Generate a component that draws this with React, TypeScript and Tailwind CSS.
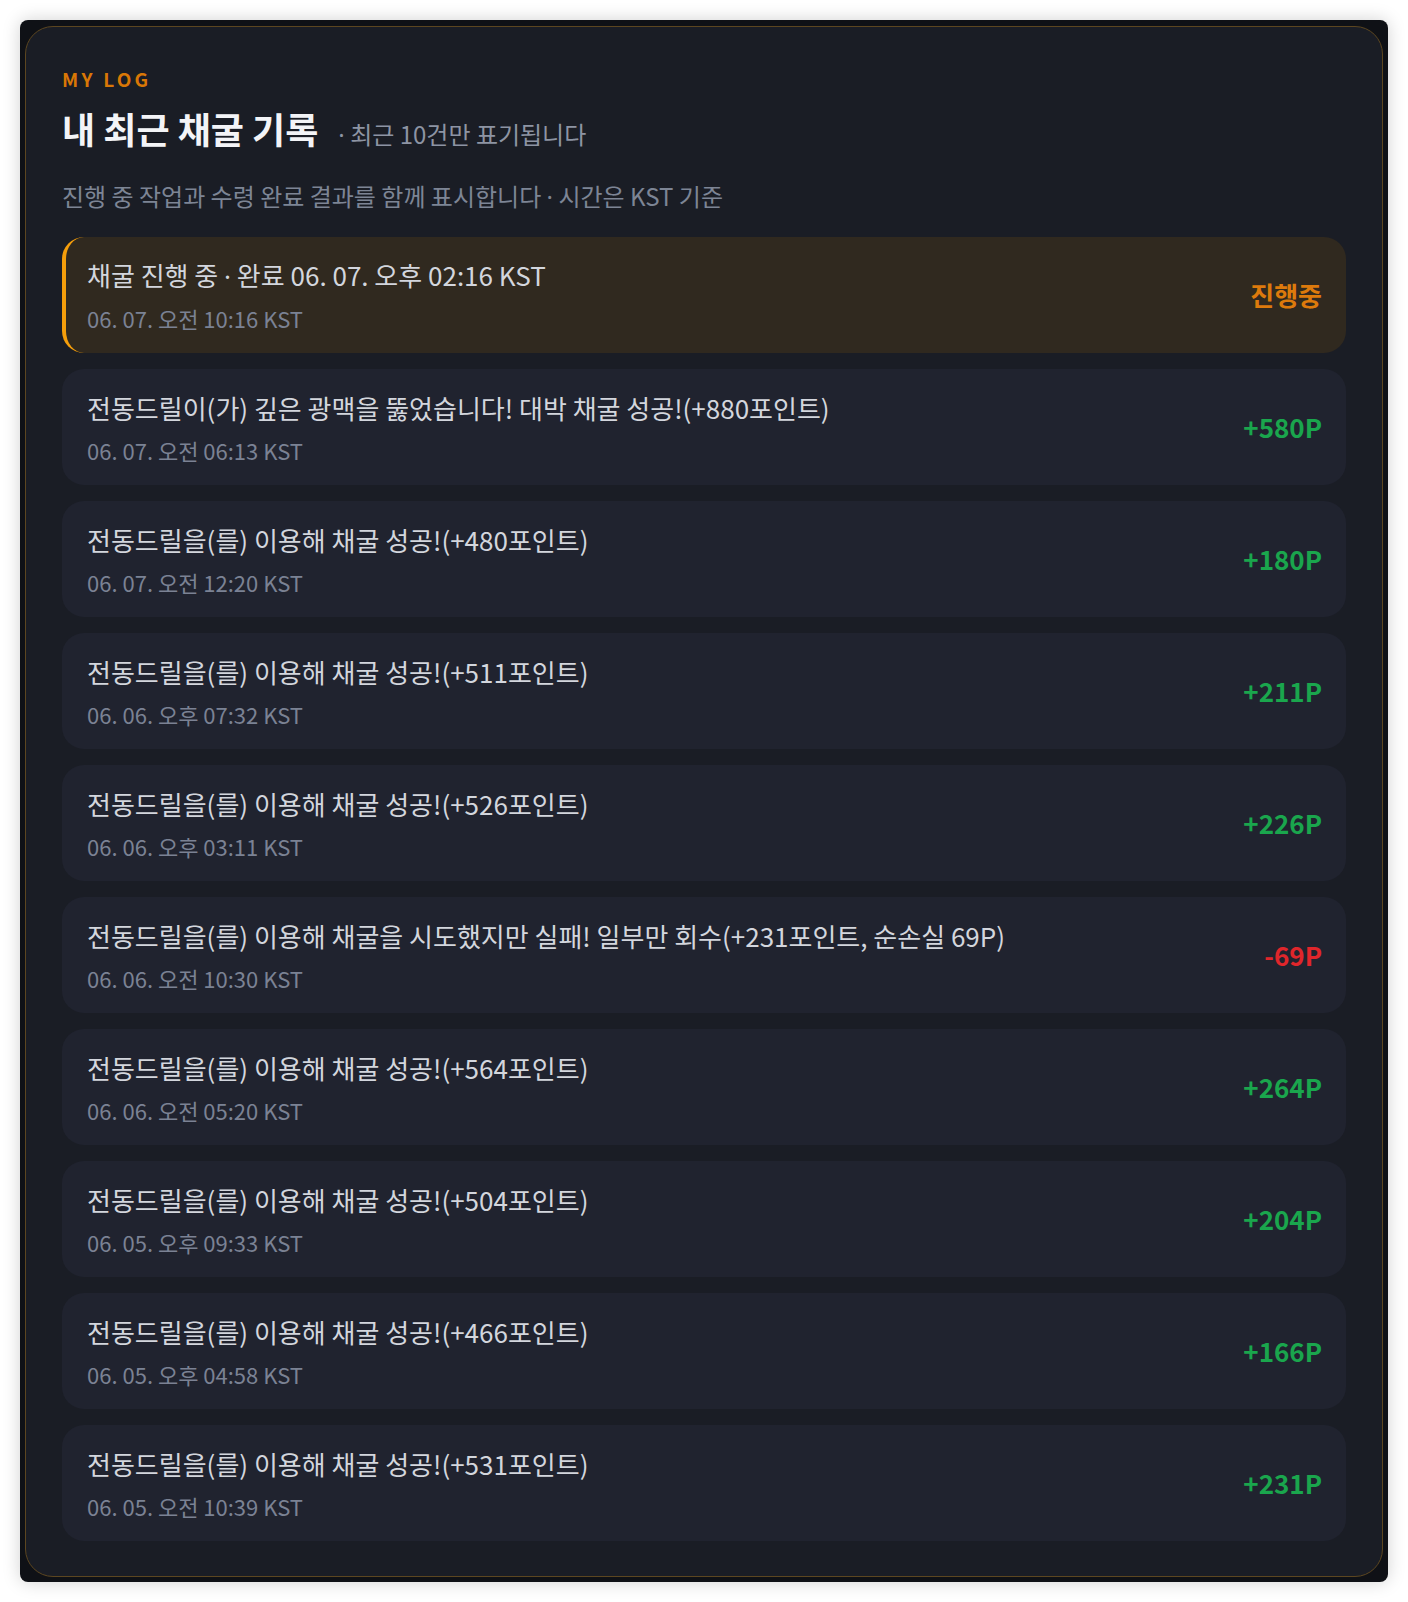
import React from 'react';

type LogItem = {
  title: React.ReactNode;
  time: string;
  value: string;
  kind: 'pending' | 'gain' | 'loss';
};

// narrow middle dot (the CJK font draws it full width)
function Dot() {
  return <span style={{ fontFamily: '"Noto Sans", sans-serif' }}>·</span>;
}

const logs: LogItem[] = [
  {
    title: (
      <>
        채굴 진행 중 <Dot /> 완료 06. 07. 오후 02:16 KST
      </>
    ),
    time: '06. 07. 오전 10:16 KST',
    value: '진행중',
    kind: 'pending',
  },
  { title: '전동드릴이(가) 깊은 광맥을 뚫었습니다! 대박 채굴 성공!(+880포인트)', time: '06. 07. 오전 06:13 KST', value: '+580P', kind: 'gain' },
  { title: '전동드릴을(를) 이용해 채굴 성공!(+480포인트)', time: '06. 07. 오전 12:20 KST', value: '+180P', kind: 'gain' },
  { title: '전동드릴을(를) 이용해 채굴 성공!(+511포인트)', time: '06. 06. 오후 07:32 KST', value: '+211P', kind: 'gain' },
  { title: '전동드릴을(를) 이용해 채굴 성공!(+526포인트)', time: '06. 06. 오후 03:11 KST', value: '+226P', kind: 'gain' },
  { title: '전동드릴을(를) 이용해 채굴을 시도했지만 실패! 일부만 회수(+231포인트, 순손실 69P)', time: '06. 06. 오전 10:30 KST', value: '-69P', kind: 'loss' },
  { title: '전동드릴을(를) 이용해 채굴 성공!(+564포인트)', time: '06. 06. 오전 05:20 KST', value: '+264P', kind: 'gain' },
  { title: '전동드릴을(를) 이용해 채굴 성공!(+504포인트)', time: '06. 05. 오후 09:33 KST', value: '+204P', kind: 'gain' },
  { title: '전동드릴을(를) 이용해 채굴 성공!(+466포인트)', time: '06. 05. 오후 04:58 KST', value: '+166P', kind: 'gain' },
  { title: '전동드릴을(를) 이용해 채굴 성공!(+531포인트)', time: '06. 05. 오전 10:39 KST', value: '+231P', kind: 'gain' },
];

function LogRow({ item }: { item: LogItem }) {
  const pending = item.kind === 'pending';
  const valueColor =
    item.kind === 'pending' ? 'text-[#dd7a0c]' : item.kind === 'loss' ? 'text-[#e0262b]' : 'text-[#1aa64d]';

  return (
    <li
      className={`flex h-[116px] items-center justify-between rounded-[22px] border-l-4 pl-[21px] pr-6 ${
        pending ? 'border-[#f59e0b] bg-[#30291f]' : 'border-transparent bg-[#20232f]'
      }`}
    >
      <div className="flex flex-col">
        <span className="text-[26px] leading-[36px] text-[#d3d6dd]">{item.title}</span>
        <span className="mt-[9px] text-[22px] leading-[30px] text-[#7b8294]">{item.time}</span>
      </div>
      <span className={`text-[26px] font-bold leading-none ${valueColor}`}>{item.value}</span>
    </li>
  );
}

export default function App() {
  return (
    <div className="min-h-screen bg-white p-5" style={{ fontFamily: '"Noto Sans CJK KR", "Noto Sans", sans-serif' }}>
      <div className="w-[1368px] rounded-lg bg-[#0f1116] p-[5px] pt-[6px] shadow-[0_0_18px_rgba(0,0,0,0.18)]">
        <section className="rounded-[28px] border border-[#5c4620] bg-[#1a1d25] px-9 pt-[40px] pb-[35px]">
          <p className="text-[19px] font-bold leading-[24px] tracking-[0.17em] text-[#d97706]">MY LOG</p>
          <div className="mt-[17px] flex items-baseline">
            <h2 className="text-[36px] font-bold leading-[40px] text-[#f3f4f7]">내 최근 채굴 기록</h2>
            <span className="ml-[20px] text-[24px] text-[#8d94a3]">
              <Dot /> 최근 10건만 표기됩니다
            </span>
          </div>
          <p className="mt-[27px] text-[24px] leading-[32px] text-[#7d8595]">
            진행 중 작업과 수령 완료 결과를 함께 표시합니다 <Dot /> 시간은 KST 기준
          </p>
          <ul className="mt-[24px] flex flex-col gap-4">
            {logs.map((item, i) => (
              <LogRow key={i} item={item} />
            ))}
          </ul>
        </section>
      </div>
    </div>
  );
}
